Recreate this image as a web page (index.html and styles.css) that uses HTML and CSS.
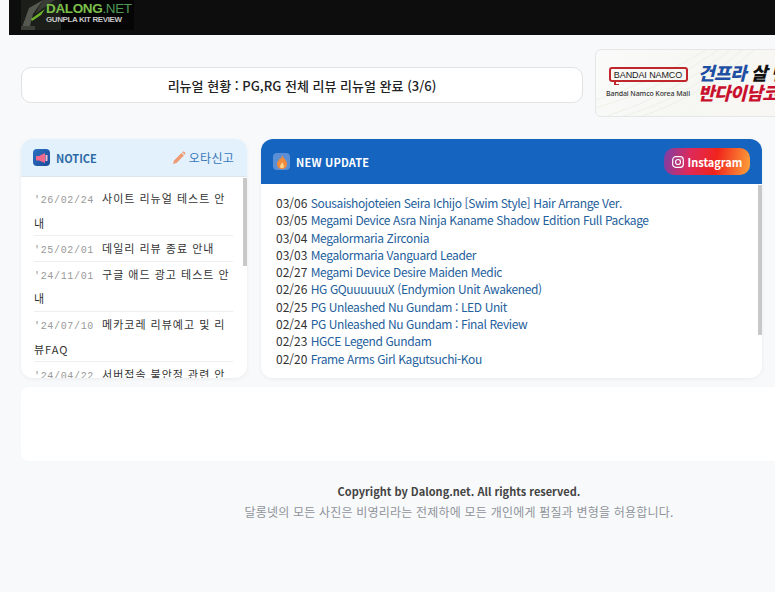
FILE: index.html
```html
<!DOCTYPE html>
<html lang="ko">
<head>
<meta charset="utf-8">
<title>Dalong.net</title>
<link rel="stylesheet" href="styles.css">
</head>
<body>
<div class="page">
  <header class="topbar">
    <div class="logo">
      <svg class="logo-art" width="40" height="30" viewBox="0 0 40 30">
        <rect width="40" height="30" fill="#1c1e1a"/>
        <path d="M0 30 L8 8 L22 0 L12 14 L8 30Z" fill="#55584f"/>
        <path d="M22 0 L34 0 L14 14Z" fill="#3a3d36"/>
        <path d="M10 19 L24 9 L20 15 L11 21Z" fill="#6fb52c"/>
        <path d="M0 26 H14 V30 H0Z" fill="#3c3f38"/>
      </svg>
      <div class="logo-text">
        <div class="logo-name"><b>DALONG</b>.NET</div>
        <div class="logo-sub">GUNPLA KIT REVIEW</div>
      </div>
    </div>
  </header>

  <section class="promo">
    <div class="status">리뉴얼 현황 : PG,RG 전체 리뷰 리뉴얼 완료 (3/6)</div>
    <div class="ad">
      <svg class="ad-lines" width="180" height="68" viewBox="0 0 180 68" fill="none" stroke="#e9ecdf" stroke-width=".7">
        <path d="M0 50 Q60 30 110 0"/><path d="M0 58 Q70 38 122 0"/><path d="M6 68 Q80 44 134 0"/><path d="M22 68 Q92 48 146 0"/><path d="M40 68 Q100 50 158 0"/>
      </svg>
      <div class="ad-brand">
        <span class="ad-logo">BANDAI NAMCO</span>
        <span class="ad-mall">Bandai Namco Korea Mall</span>
      </div>
      <div class="ad-copy">
        <div class="ad-line"><span class="ad-blue">건프라</span> 살 땐</div>
        <div class="ad-red">반다이남코</div>
      </div>
    </div>
  </section>

  <section class="columns">
    <article class="card notice">
      <div class="notice-head">
        <div class="head-title">
          <span class="icon-tile tile-notice">
            <svg width="13" height="12" viewBox="0 0 13 12"><path d="M1 4 H4 L10 1 V11 L4 8.500 H1Z" fill="#f0688c"/><rect x="10.500" y="3" width="2" height="6" fill="#f7b7c6"/></svg>
          </span>
          <span class="notice-title">NOTICE</span>
        </div>
        <div class="report">
          <svg width="14" height="14" viewBox="0 0 14 14"><path d="M1 13 L2 9.500 L9.500 2 L12 4.500 L4.500 12Z" fill="#ee9a73"/><path d="M10.200 1.300 L11 .6 Q11.600 .2 12.200 .8 L13.200 1.800 Q13.700 2.400 13.200 3 L12.600 3.700Z" fill="#ee9a73"/></svg>
          <span>오타신고</span>
        </div>
      </div>
      <ul class="notice-list">
        <li><span class="date">'26/02/24</span>사이트 리뉴얼 테스트 안내</li>
        <li><span class="date">'25/02/01</span>데일리 리뷰 종료 안내</li>
        <li><span class="date">'24/11/01</span>구글 애드 광고 테스트 안내</li>
        <li><span class="date">'24/07/10</span>메카코레 리뷰예고 및 리뷰FAQ</li>
        <li><span class="date">'24/04/22</span>서버접속 불안정 관련 안내</li>
      </ul>
      <span class="thumb thumb-notice"></span>
    </article>

    <article class="card update">
      <div class="update-head">
        <div class="head-title">
          <span class="icon-tile tile-update">
            <svg width="10" height="14" viewBox="0 0 10 14"><path d="M5 0 C6 3 10 5 10 9 C10 12 8 14 5 14 C2 14 0 12 0 9 C0 6 2 6 3 3 C4 4 4.500 4 5 0Z" fill="#f08a3c"/><path d="M5 7 C6 9 7.500 10 7 12 C6.500 13.500 3.500 13.500 3 12 C2.600 10 4.500 9.500 5 7Z" fill="#f9d28c"/></svg>
          </span>
          <span class="update-title">NEW UPDATE</span>
        </div>
        <div class="insta">
          <svg width="12" height="12" viewBox="0 0 12 12" fill="none" stroke="#fff" stroke-width="1.200"><rect x=".7" y=".7" width="10.600" height="10.600" rx="3"/><circle cx="6" cy="6" r="2.500"/><circle cx="9" cy="3" r=".5" fill="#fff" stroke="none"/></svg>
          <span>Instagram</span>
        </div>
      </div>
      <ul class="update-list">
        <li>03/06 <a>Sousaishojoteien Seira Ichijo [Swim Style] Hair Arrange Ver.</a></li>
        <li>03/05 <a>Megami Device Asra Ninja Kaname Shadow Edition Full Package</a></li>
        <li>03/04 <a>Megalormaria Zirconia</a></li>
        <li>03/03 <a>Megalormaria Vanguard Leader</a></li>
        <li>02/27 <a>Megami Device Desire Maiden Medic</a></li>
        <li>02/26 <a>HG GQuuuuuuX (Endymion Unit Awakened)</a></li>
        <li>02/25 <a>PG Unleashed Nu Gundam : LED Unit</a></li>
        <li>02/24 <a>PG Unleashed Nu Gundam : Final Review</a></li>
        <li>02/23 <a>HGCE Legend Gundam</a></li>
        <li>02/20 <a>Frame Arms Girl Kagutsuchi-Kou</a></li>
      </ul>
      <span class="thumb thumb-update"></span>
    </article>
  </section>

  <section class="blank"></section>

  <footer class="footer">
    <div class="copy">Copyright by Dalong.net. All rights reserved.</div>
    <div class="policy">달롱넷의 모든 사진은 비영리라는 전제하에 모든 개인에게 펌질과 변형을 허용합니다.</div>
  </footer>
</div>
</body>
</html>
```

FILE: styles.css
```css
* { box-sizing: border-box; }
html, body { margin: 0; padding: 0; height: 592px; overflow: hidden; }
body {
  background: #f8f9fb;
  font-family: "Noto Sans CJK KR", "Noto Sans", sans-serif;
  color: #333;
}
.page { width: 900px; margin-left: 9px; }

.topbar { height: 35px; background: #0d0d0d; padding-left: 12px; }
.logo { width: 113px; height: 30px; background: #050505; display: flex; overflow: hidden; }
.logo-art { flex: none; margin-right: -15px; }
.logo-text { position: relative; line-height: 1; white-space: nowrap; }
.logo-name { font-family: "Liberation Sans", sans-serif; font-size: 13.500px; letter-spacing: -.35px; color: #4f9a58; margin-top: 2px; height: 14px; }
.logo-name b { color: #7cc04a; }
.logo-sub { font-family: "Liberation Sans", sans-serif; font-size: 8px; font-weight: 700; letter-spacing: -.4px; color: #c4c4c4; margin-top: 0; }

.promo { display: flex; gap: 12px; align-items: flex-start; margin-top: 14px; padding-left: 12px; }
.status {
  width: 562px; height: 36px; margin-top: 18px; background: #fff; flex: none;
  border: 1px solid #e2e2e2; border-radius: 10px;
  display: flex; align-items: center; justify-content: center;
  font-size: 13px; font-weight: 500; color: #222;
}
.ad {
  position: relative; overflow: hidden;
  width: 290px; height: 68px; flex: none;
  border: 1px solid #e6e6e6; border-radius: 6px;
  background: linear-gradient(120deg, #fafafa, #f6f7f2 40%, #fdf6f7);
  display: flex; align-items: center; gap: 8px; padding-left: 10px;
}
.ad-lines { position: absolute; left: 0; top: 0; }
.ad-brand { position: relative; width: 84px; display: flex; flex-direction: column; align-items: center; gap: 7px; margin-top: -1px; }
.ad-logo {
  position: relative;
  width: 79px; height: 15px; border: 2px solid #c0272d; border-radius: 3px;
  font-family: "Liberation Sans", sans-serif; font-size: 9px; font-weight: 400; color: #222;
  display: flex; align-items: center; justify-content: center; letter-spacing: -.1px; white-space: nowrap;
}
.ad-logo::after {
  content: ""; position: absolute; left: 3px; bottom: -5px; width: 3px; height: 3px;
  border-left: 2px solid #c0272d; border-bottom: 1px solid #c0272d;
}
.ad-mall { font-size: 7px; font-weight: 500; color: #333; white-space: nowrap; letter-spacing: -.1px; font-family: "Noto Sans", sans-serif; }
.ad-copy { position: relative; margin-top: -3px; font-size: 18px; font-weight: 900; font-style: italic; line-height: 20px; white-space: nowrap; letter-spacing: -.5px; }
.ad-line { color: #111; }
.ad-blue { color: #1f4fa3; }
.ad-red { color: #c8102e; }

.columns { display: flex; gap: 14px; margin-top: 22px; padding-left: 12px; }
.card {
  position: relative; height: 239px; background: #fff; border-radius: 12px;
  overflow: hidden; box-shadow: 0 1px 4px rgba(0,0,0,.06); flex: none;
}
.notice { width: 226px; }
.update { width: 501px; }
.head-title { display: flex; align-items: center; gap: 6px; }
.icon-tile { width: 17px; height: 17px; border-radius: 4px; display: flex; align-items: center; justify-content: center; }
.tile-notice { background: linear-gradient(135deg, #2b6fc0, #1b4c99); }
.tile-update { background: #5a8fd6; }

.notice-head {
  height: 38px; background: #e3f1fc; border-bottom: 1px solid #dce6ee;
  display: flex; align-items: center; justify-content: space-between; padding: 0 13px 0 12px;
}
.notice-title { font-size: 11px; font-weight: 700; color: #2c6aa6; }
.report { display: flex; align-items: center; gap: 3px; font-size: 12px; letter-spacing: .25px; color: #3a78b8; }

.notice-list { list-style: none; margin: 0; padding: 9px 14px 0 13px; }
.notice-list li {
  font-size: 11px; line-height: 24.600px; color: #333; letter-spacing: 1px;
  border-bottom: 1px solid #eee;
}
.date { font-family: "Liberation Mono", monospace; font-size: 10px; line-height: 1; color: #999; letter-spacing: .67px; margin: 0 8px 0 0; }

.update-head {
  height: 45px; background: #1565c0; display: flex; align-items: center;
  justify-content: space-between; padding: 0 12px;
}
.update-title { font-size: 11px; font-weight: 700; color: #fff; letter-spacing: .2px; }
.insta {
  width: 86px; height: 27px; border-radius: 10px;
  background: linear-gradient(100deg, #7b3fa8 0%, #dd2a5b 30%, #f0241c 60%, #fda33a 100%);
  display: flex; align-items: center; justify-content: center; gap: 4px;
  font-size: 11px; font-weight: 700; color: #fff;
}
.update-list { list-style: none; margin: 0; padding: 10px 15px 0; font-size: 12px; line-height: 17.300px; color: #333; }
.update-list li { white-space: nowrap; }
.update-list a { color: #24609c; letter-spacing: -.38px; }

.thumb { position: absolute; width: 4px; background: #c8c8c8; }
.thumb-notice { left: 222px; top: 39px; height: 88px; }
.thumb-update { left: 497px; top: 46px; height: 150px; }

.blank { height: 74px; margin: 9px 0 0 12px; width: 876px; background: #fff; border-radius: 8px; }

.footer { text-align: center; margin-top: 21px; }
.copy { font-size: 11px; font-weight: 700; line-height: 18px; color: #444; }
.policy { font-size: 12px; line-height: 24px; color: #8f949a; letter-spacing: .2px; }
```
